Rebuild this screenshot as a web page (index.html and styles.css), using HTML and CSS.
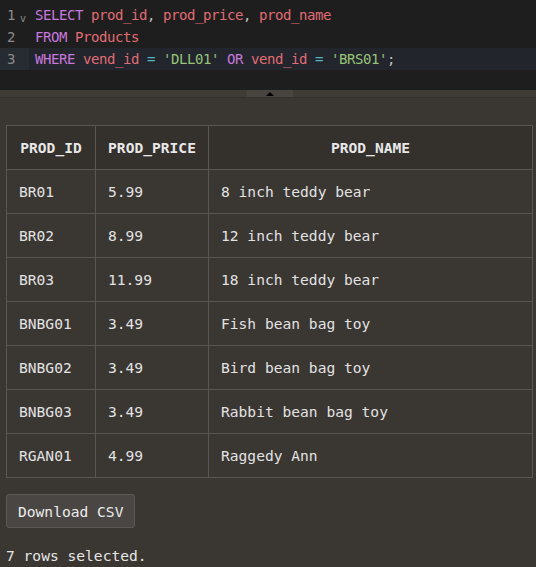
FILE: index.html
```html
<!DOCTYPE html>
<html>
<head>
<meta charset="utf-8">
<link rel="stylesheet" href="styles.css">
</head>
<body>
<div class="editor">
  <div class="line">
    <div class="gutter"><span class="num">1</span><span class="fold">v</span></div>
    <div class="code"><span class="kw">SELECT</span> <span class="id">prod_id</span><span class="pn">,</span> <span class="id">prod_price</span><span class="pn">,</span> <span class="id">prod_name</span></div>
  </div>
  <div class="line">
    <div class="gutter"><span class="num">2</span></div>
    <div class="code"><span class="kw">FROM</span> <span class="id">Products</span></div>
  </div>
  <div class="line active">
    <div class="gutter"><span class="num">3</span></div>
    <div class="code"><span class="kw">WHERE</span> <span class="id">vend_id</span> <span class="op">=</span> <span class="str">'DLL01'</span> <span class="kw">OR</span> <span class="id">vend_id</span> <span class="op">=</span> <span class="str">'BRS01'</span><span class="pn">;</span></div>
  </div>
</div>
<div class="splitter"><div class="handle"><span class="tri"></span></div></div>
<div class="results">
  <table class="grid">
    <colgroup><col class="c1"><col class="c2"><col class="c3"></colgroup>
    <thead>
      <tr><th>PROD_ID</th><th>PROD_PRICE</th><th>PROD_NAME</th></tr>
    </thead>
    <tbody>
      <tr><td>BR01</td><td>5.99</td><td>8 inch teddy bear</td></tr>
      <tr><td>BR02</td><td>8.99</td><td>12 inch teddy bear</td></tr>
      <tr><td>BR03</td><td>11.99</td><td>18 inch teddy bear</td></tr>
      <tr><td>BNBG01</td><td>3.49</td><td>Fish bean bag toy</td></tr>
      <tr><td>BNBG02</td><td>3.49</td><td>Bird bean bag toy</td></tr>
      <tr><td>BNBG03</td><td>3.49</td><td>Rabbit bean bag toy</td></tr>
      <tr><td>RGAN01</td><td>4.99</td><td>Raggedy Ann</td></tr>
    </tbody>
  </table>
  <button class="btn">Download CSV</button>
  <div class="status">7 rows selected.</div>
</div>
</body>
</html>
```
FILE: styles.css
```css
html, body {
  margin: 0;
  padding: 0;
}
body {
  background: #3a3632;
  font-family: "DejaVu Sans Mono", "Liberation Mono", monospace;
  color: #e6e6e6;
  width: 536px;
  height: 567px;
  overflow: hidden;
}
.editor {
  background: #1e1e1e;
  height: 90px;
  padding-top: 4px;
  box-sizing: border-box;
}
.line {
  display: flex;
  height: 22px;
  align-items: center;
  font-size: 14px;
  letter-spacing: -0.43px;
}
.line.active {
  background: #22252b;
}
.gutter {
  width: 29px;
  height: 22px;
  display: flex;
  align-items: center;
  position: relative;
  flex: none;
  margin-right: 6px;
}
.line.active .gutter {
  background: #272b32;
}
.num {
  color: #8a8a8a;
  padding-left: 7px;
}
.fold {
  position: absolute;
  left: 20px;
  top: 8px;
  font-size: 10px;
  color: #8a8a8a;
  line-height: 14px;
}
.code {
  white-space: pre;
  color: #d4d4d4;
}
.kw { color: #c678dd; }
.id { color: #e06c75; }
.str { color: #98c379; }
.op { color: #56b6c2; }
.pn { color: #c0c0c0; }
.splitter {
  height: 7px;
  background: #3f3b37;
  border-bottom: 1px solid #33302c;
  display: flex;
  justify-content: center;
}
.handle {
  width: 46px;
  height: 7px;
  background: #48443f;
  display: flex;
  justify-content: center;
  align-items: center;
  margin-left: 4px;
}
.tri {
  width: 0;
  height: 0;
  border-left: 4px solid transparent;
  border-right: 4px solid transparent;
  border-bottom: 4px solid #000;
}
.results {
  padding: 27px 3px 0 6px;
}
.grid {
  border-collapse: collapse;
  table-layout: fixed;
  width: 527px;
  font-size: 14.6px;
}
.c1 { width: 89px; }
.c2 { width: 113px; }
.grid th, .grid td {
  border: 1px solid #5a5652;
  height: 44px;
  padding: 0 12px;
  line-height: 20px;
  box-sizing: border-box;
  white-space: nowrap;
}
.grid th {
  background: #34302c;
  font-weight: bold;
  text-align: center;
  color: #e8e8e8;
}
.grid td {
  text-align: left;
  color: #e2e2e2;
}
.btn {
  display: block;
  margin-top: 16px;
  height: 34px;
  padding: 0 11px;
  background: #4a4643;
  border: 1px solid #5c5854;
  border-radius: 3px;
  color: #ececec;
  font-family: "DejaVu Sans Mono", "Liberation Mono", monospace;
  font-size: 14.6px;
}
.status {
  margin-top: 18px;
  font-size: 14.6px;
  line-height: 20px;
  color: #e6e6e6;
}
```
